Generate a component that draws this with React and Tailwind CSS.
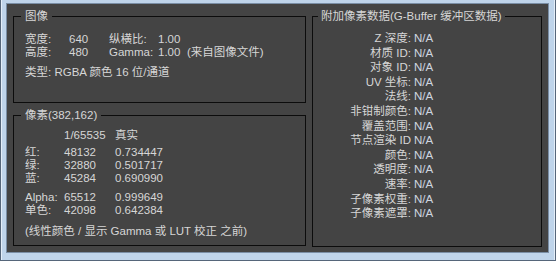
// ImageInfo.jsx — pixel / image info panel inside a framed window

const FONT = "font-['Liberation_Sans','Noto_Sans_CJK_SC',sans-serif]"
const TEXT = 'text-[11.5px] text-[#d6d6d6]'

const FIELDSET = 'border border-[#0c0c0c] p-0 m-0 min-w-0'
const LEGEND = 'leading-[15px] whitespace-nowrap'

const PIXEL_ROWS = [
  { label: '红:', raw: '48132', real: '0.734447' },
  { label: '绿:', raw: '32880', real: '0.501717' },
  { label: '蓝:', raw: '45284', real: '0.690990' },
]

const ALPHA_ROWS = [
  { label: 'Alpha:', raw: '65512', real: '0.999649' },
  { label: '单色:', raw: '42098', real: '0.642384' },
]

const GBUFFER_ROWS = [
  'Z 深度:',
  '材质 ID:',
  '对象 ID:',
  'UV 坐标:',
  '法线:',
  '非钳制颜色:',
  '覆盖范围:',
  '节点渲染 ID',
  '颜色:',
  '透明度:',
  '速率:',
  '子像素权重:',
  '子像素遮罩:',
]

function ValueRow({ label, raw, real }) {
  return (
    <div className="flex leading-[13px]">
      <span className="w-[39px]">{label}</span>
      <span className="w-[51px]">{raw}</span>
      <span>{real}</span>
    </div>
  )
}

function ImageBox() {
  return (
    <fieldset className={`${FIELDSET} h-[94px]`}>
      <legend className={`${LEGEND} ml-[7px] px-[4px]`}>图像</legend>
      <div className="pl-[11px] pt-[9px] leading-[13px]">
        <div className="flex">
          <span className="w-[44px]">宽度:</span>
          <span className="w-[40px]">640</span>
          <span className="w-[49px]">纵横比:</span>
          <span>1.00</span>
        </div>
        <div className="flex">
          <span className="w-[44px]">高度:</span>
          <span className="w-[40px]">480</span>
          <span className="w-[49px]">Gamma:</span>
          <span className="w-[29px]">1.00</span>
          <span>(来自图像文件)</span>
        </div>
        <div className="mt-[7px]">类型: RGBA 颜色 16 位/通道</div>
      </div>
    </fieldset>
  )
}

function PixelBox() {
  return (
    <fieldset className={`${FIELDSET} h-[138px]`}>
      <legend className={`${LEGEND} ml-[7px] px-[4px]`}>像素(382,162)</legend>
      <div className="pl-[11px] pt-[6px]">
        <ValueRow label="" raw="1/65535" real="真实" />
        <div className="mt-[4px]">
          {PIXEL_ROWS.map((r) => <ValueRow key={r.label} {...r} />)}
        </div>
        <div className="mt-[6px]">
          {ALPHA_ROWS.map((r) => <ValueRow key={r.label} {...r} />)}
        </div>
        <div className="mt-[8px] leading-[13px]">(线性颜色 / 显示 Gamma 或 LUT 校正 之前)</div>
      </div>
    </fieldset>
  )
}

function GBufferBox() {
  return (
    <fieldset className={`${FIELDSET} w-[230px] h-[238px]`}>
      <legend className={`${LEGEND} ml-[5px] px-[3px]`}>附加像素数据(G-Buffer 缓冲区数据)</legend>
      <div className="pt-[7px] flex flex-col leading-[14.6px]">
        {GBUFFER_ROWS.map((label) => (
          <div key={label} className="flex">
            <span className="w-[98px] text-right whitespace-nowrap">{label}</span>
            <span className="ml-[3px] text-[#cfd6e0]">N/A</span>
          </div>
        ))}
      </div>
    </fieldset>
  )
}

export default function App() {
  return (
    <div className={`${FONT} ${TEXT} w-[556px] h-[261px] flex bg-[#bfd4ea] border-x border-b border-[#56667a] pt-[3px] pl-[5px] pr-[6px] pb-[7px] shadow-[inset_1px_0_0_#e4eef9,inset_-1px_0_0_#e4eef9]`}>
      <div className="flex-1 flex gap-[6px] bg-[#444444] border border-[#7a8ea5] pt-[5px] pl-[6px] pr-[6px]">
        <div className="w-[293px] flex flex-col gap-[5px]">
          <ImageBox />
          <PixelBox />
        </div>
        <GBufferBox />
      </div>
    </div>
  )
}
